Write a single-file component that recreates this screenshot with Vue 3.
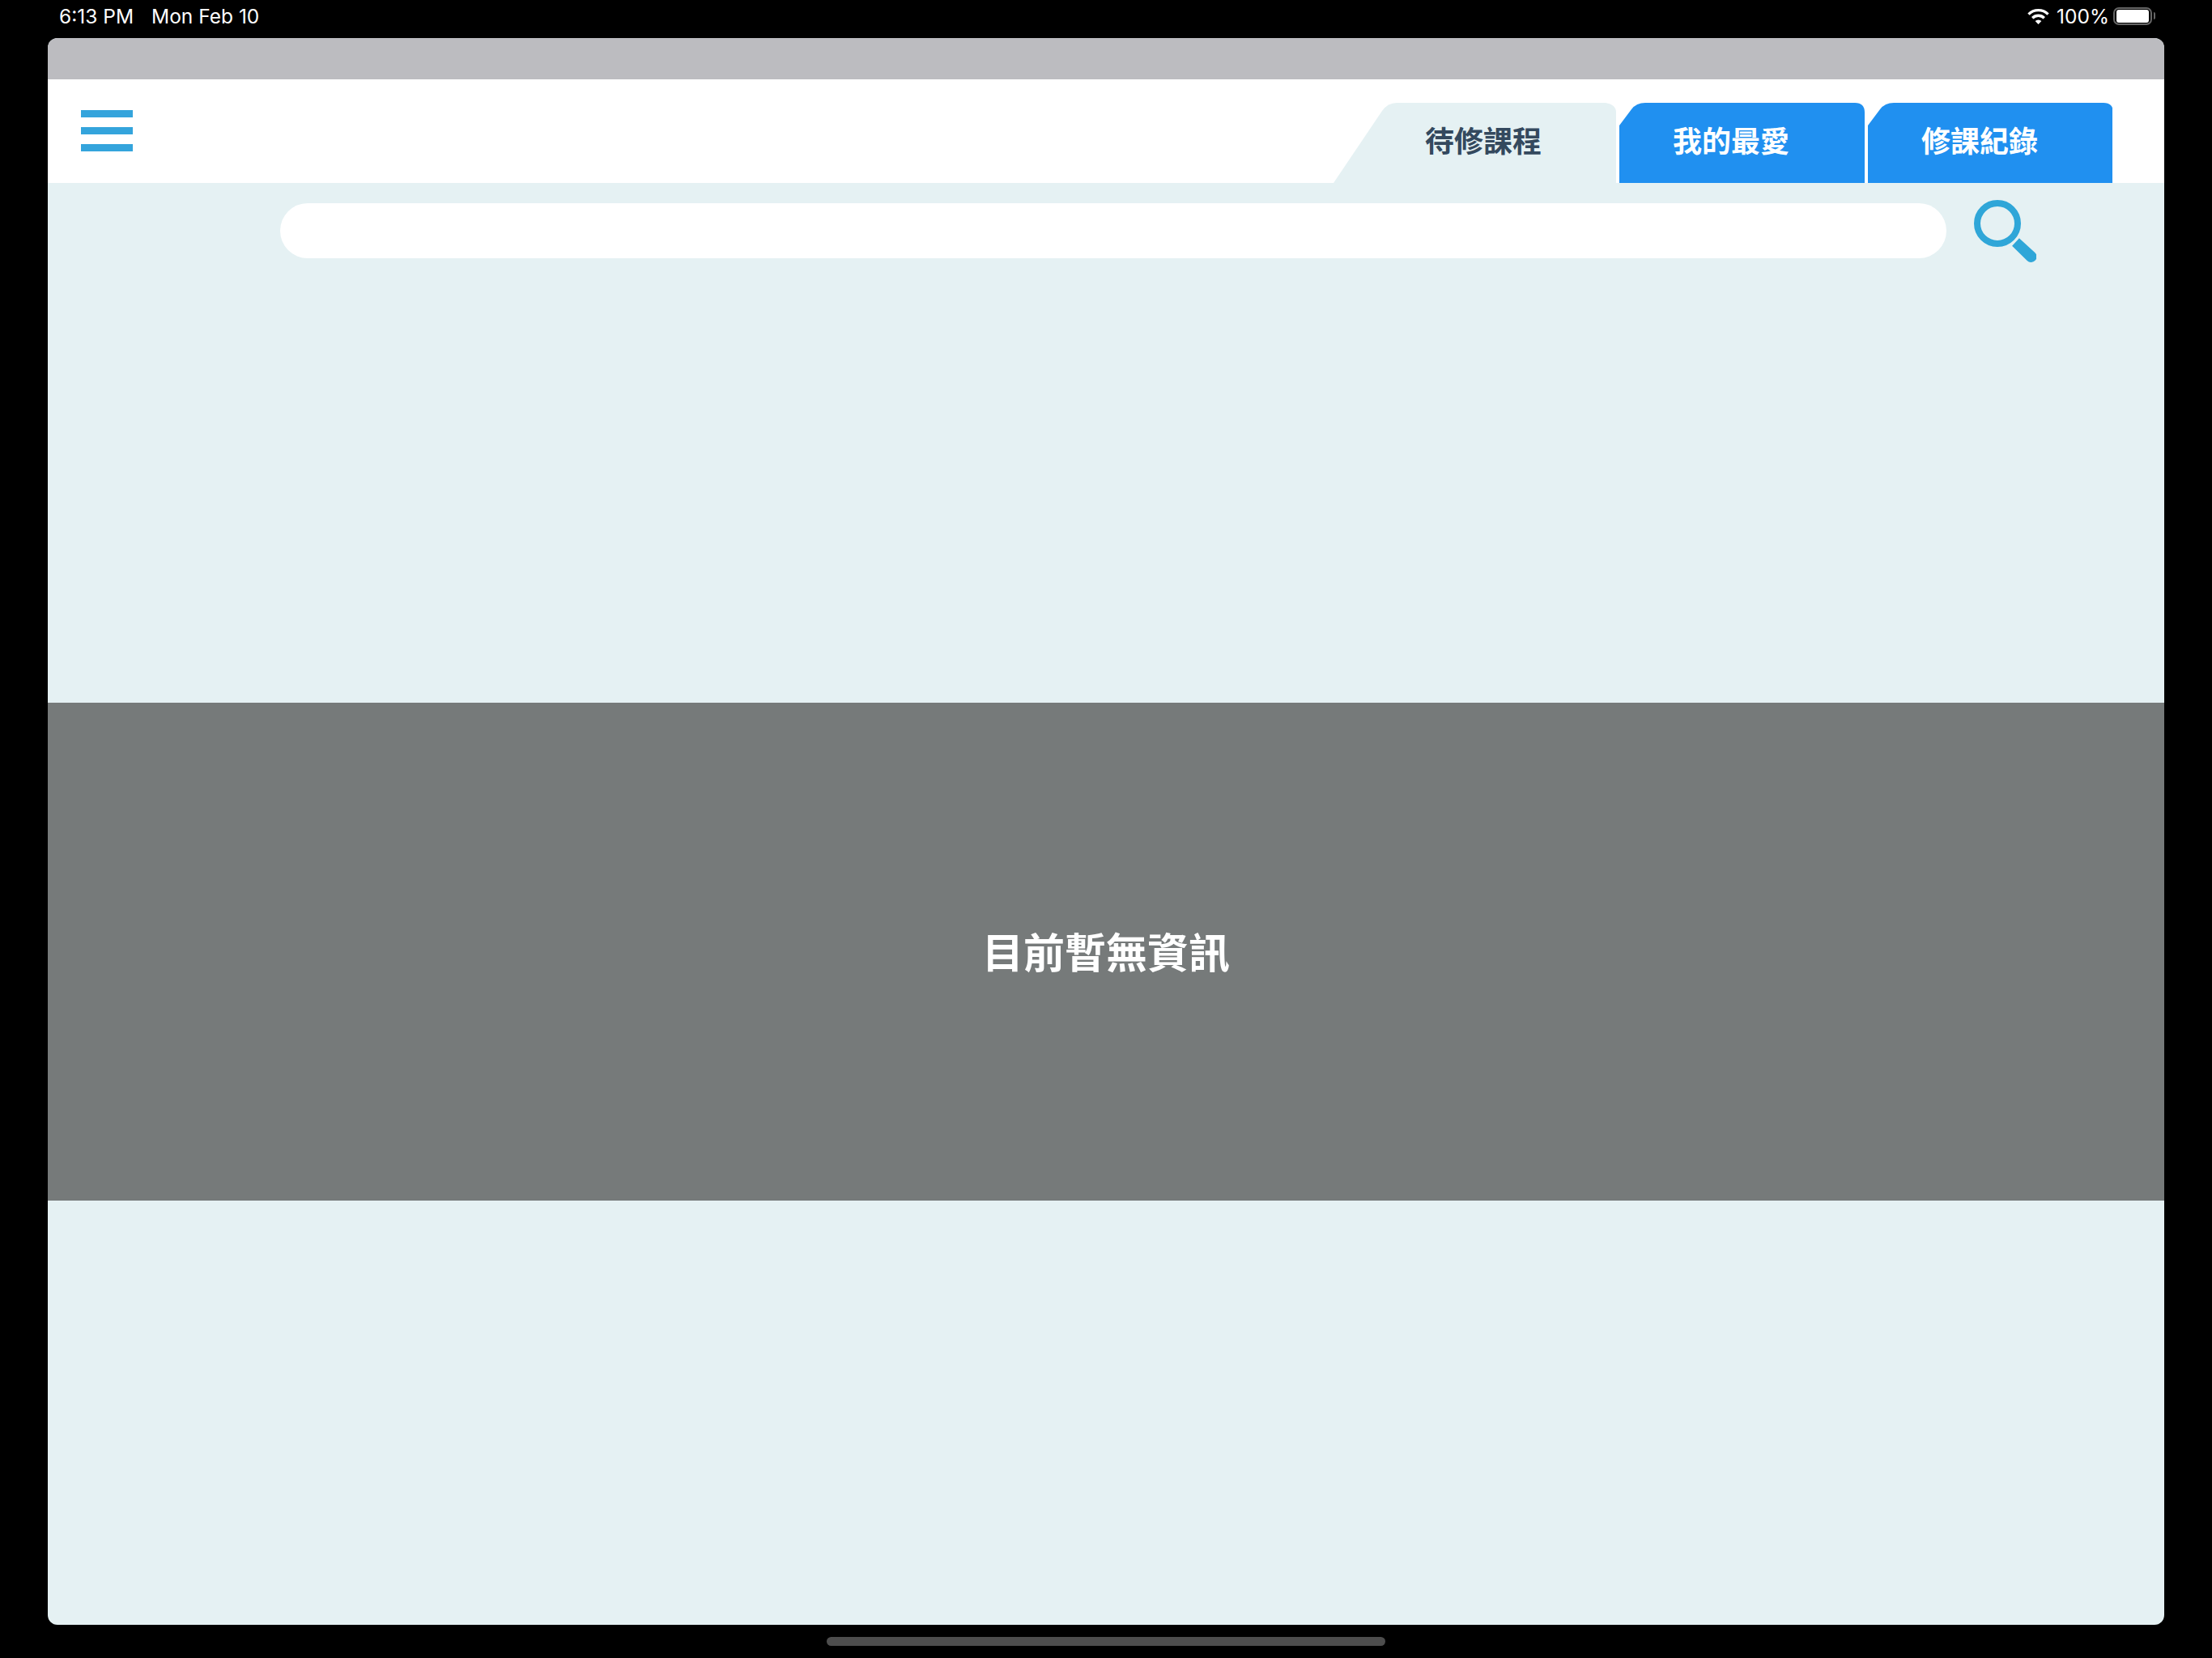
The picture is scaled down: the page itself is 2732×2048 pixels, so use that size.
<script setup>
const tabs = [
  { label: '待修課程', cls: 'tab-active' },
  { label: '我的最愛', cls: 'tab-blue' },
  { label: '修課紀錄', cls: 'tab-blue tab-last' }
]
</script>

<template>
  <div class="page">
    <div class="status-bar">
      <span class="time">6:13 PM</span>
      <span class="date">Mon Feb 10</span>
      <div class="status-right">
        <svg class="wifi" width="27" height="20" viewBox="0 0 27 20">
          <path d="M1.5 7.6A17 17 0 0 1 25.5 7.6" fill="none" stroke="#fff" stroke-width="3.4" />
          <path d="M6.2 12.2A10.4 10.4 0 0 1 20.8 12.2" fill="none" stroke="#fff" stroke-width="3.4" />
          <path d="M13.5 20L9.6 16A5.5 5.5 0 0 1 17.4 16Z" fill="#fff" />
        </svg>
        <span class="percent">100%</span>
        <div class="battery"><div class="battery-level"></div></div>
        <div class="battery-tip"></div>
      </div>
    </div>

    <div class="app">
      <div class="top-strip"></div>
      <header class="header">
        <div class="menu">
          <span></span>
          <span></span>
          <span></span>
        </div>
        <div v-for="tab in tabs" :key="tab.label" class="tab" :class="tab.cls">{{ tab.label }}</div>
      </header>

      <main class="content">
        <div class="search-row">
          <div class="search-input"></div>
          <svg class="search-icon" width="77" height="77" viewBox="0 0 77 77">
            <circle cx="29" cy="29" r="25" fill="none" stroke="#2fa6d8" stroke-width="8" />
            <path d="M47.1 56.8L55.9 47.2L75.3 64.9A7 7 0 0 1 65.7 75.1Z" fill="#2fa6d8" />
          </svg>
        </div>
        <div class="empty-band">目前暫無資訊</div>
      </main>
    </div>

    <div class="home-indicator"></div>
  </div>
</template>

<style>
html,
body {
  margin: 0;
  background: #000;
}
</style>

<style scoped>
.page {
  width: 2732px;
  height: 2048px;
  background: #000;
  display: flex;
  flex-direction: column;
  align-items: center;
  overflow: hidden;
}

.status-bar {
  width: 100%;
  height: 47px;
  box-sizing: border-box;
  padding: 0 70px 8px 73px;
  display: flex;
  align-items: center;
  color: #fff;
  font-family: Inter, "Liberation Sans", sans-serif;
  font-size: 24.5px;
}

.date {
  margin-left: 22px;
}

.status-right {
  margin-left: auto;
  display: flex;
  align-items: center;
}

.wifi {
  margin-right: 9px;
}

.percent {
  margin-right: 5px;
}

.battery {
  width: 48px;
  height: 22px;
  box-sizing: border-box;
  border: 2px solid #666;
  border-radius: 7px;
  padding: 1px 2px;
}

.battery-level {
  width: 100%;
  height: 100%;
  background: #fff;
  border-radius: 3px;
}

.battery-tip {
  width: 2px;
  height: 9px;
  margin-left: 2px;
  background: #666;
  border-radius: 0 2px 2px 0;
}

.app {
  width: 2614px;
  height: 1960px;
  border-radius: 12px;
  overflow: hidden;
  display: flex;
  flex-direction: column;
  background: #e5f1f3;
  flex-shrink: 0;
}

.top-strip {
  height: 51px;
  background: #bcbcc0;
}

.header {
  height: 128px;
  background: #fff;
  display: flex;
  align-items: flex-end;
  gap: 4px;
  padding: 0 64px 0 41px;
}

.menu {
  margin-right: auto;
  align-self: flex-start;
  margin-top: 38px;
  display: flex;
  flex-direction: column;
  gap: 12px;
}

.menu span {
  display: block;
  width: 64px;
  height: 9px;
  background: #34a4dc;
}

.tab {
  height: 99px;
  box-sizing: border-box;
  display: flex;
  align-items: center;
  padding-bottom: 10px;
  font-family: "Noto Sans CJK TC", sans-serif;
  font-size: 36px;
  font-weight: 700;
  line-height: 1;
}

.tab-active {
  width: 349px;
  padding-left: 113px;
  background: #e5f1f3;
  color: #34495e;
  clip-path: path("M0 99L60 10Q67 0 78 0L336 0Q349 2 349 12L349 99Z");
}

.tab-blue {
  width: 303px;
  padding-left: 66px;
  background: #2090f0;
  color: #fff;
  clip-path: path("M0 99L0 28L15 8Q21 0 32 0L291 0Q303 0 303 12L303 99Z");
}

.tab-last {
  width: 302px;
}

.content {
  flex: 1;
  display: flex;
  flex-direction: column;
}

.search-row {
  display: flex;
  align-items: flex-start;
  padding: 21px 0 0 287px;
  gap: 34px;
}

.search-input {
  width: 2058px;
  height: 68px;
  margin-top: 4px;
  background: #fff;
  border-radius: 34px;
}

.empty-band {
  margin-top: 544px;
  height: 615px;
  padding-bottom: 2px;
  box-sizing: border-box;
  background: #767a7a;
  color: #fff;
  display: flex;
  align-items: center;
  justify-content: center;
  font-family: "Noto Sans CJK TC", sans-serif;
  font-size: 51px;
  font-weight: 700;
  line-height: 1;
}

.home-indicator {
  width: 690px;
  height: 11px;
  margin-top: 15px;
  background: #4d4d4d;
  border-radius: 6px;
  flex-shrink: 0;
}
</style>
